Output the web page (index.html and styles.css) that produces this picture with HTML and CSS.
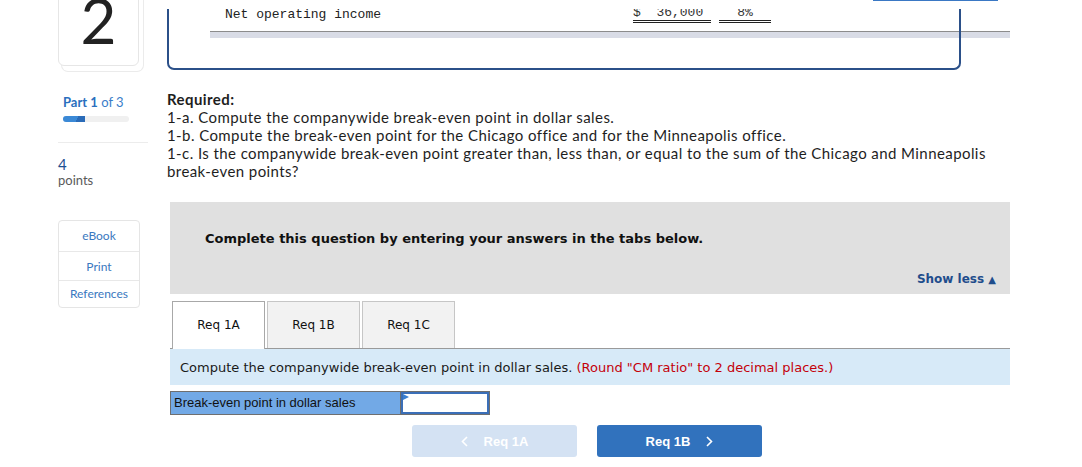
FILE: index.html
```html
<!DOCTYPE html>
<html lang="en">
<head>
<meta charset="utf-8">
<title>Break-even point</title>
<link rel="stylesheet" href="styles.css">
</head>
<body>
<div class="topbar"><div class="topbar-btn"></div></div>
<div class="page">
  <div class="top">
    <div class="qcard"><span class="qnum">2</span></div>
    <div class="exhibit">
      <div class="ex-row">
        <span class="ex-label">Net operating income</span>
        <span class="ex-amt">$  36,000</span>
        <span class="ex-pct">8%</span>
      </div>
      <div class="ex-bar"></div>
    </div>
  </div>

  <div class="body">
    <aside class="side">
      <div class="part"><b>Part 1</b> of 3</div>
      <div class="progress"><div class="progress-fill"></div></div>
      <div class="sep"></div>
      <div class="pts-num">4</div>
      <div class="pts-label">points</div>
      <div class="tools">
        <div class="tool tool-1">eBook</div>
        <div class="tool tool-2">Print</div>
        <div class="tool tool-3">References</div>
      </div>
    </aside>

    <main class="main">
      <div class="required">
        <b>Required:</b><br>
        1-a. Compute the companywide break-even point in dollar sales.<br>
        1-b. Compute the break-even point for the Chicago office and for the Minneapolis office.<br>
        1-c. Is the companywide break-even point greater than, less than, or equal to the sum of the Chicago and Minneapolis <span class="nowrap">break-even points?</span>
      </div>

      <div class="question">
        <div class="banner">
          <div class="banner-text">Complete this question by entering your answers in the tabs below.</div>
          <div class="showless">Show less <span class="tri">&#9650;</span></div>
        </div>

        <div class="tabs">
          <div class="tab active">Req 1A</div>
          <div class="tab">Req 1B</div>
          <div class="tab">Req 1C</div>
        </div>

        <div class="instr">Compute the companywide break-even point in dollar sales. <span class="red">(Round "CM ratio" to 2 decimal places.)</span></div>

        <div class="answer">
          <div class="ans-label">Break-even point in dollar sales</div>
          <div class="ans-input"><span class="flag"></span></div>
        </div>

        <div class="nav">
          <div class="btn btn-prev">
            <svg class="chev" width="7" height="11" viewBox="0 0 7 11"><path d="M6 1 L1.5 5.5 L6 10" fill="none" stroke="#fff" stroke-width="1.6"/></svg>
            <span>Req 1A</span>
          </div>
          <div class="btn btn-next">
            <span>Req 1B</span>
            <svg class="chev" width="7" height="11" viewBox="0 0 7 11"><path d="M1 1 L5.5 5.5 L1 10" fill="none" stroke="#fff" stroke-width="1.6"/></svg>
          </div>
        </div>
      </div>
    </main>
  </div>
</div>
</body>
</html>
```
FILE: styles.css
```css
* { box-sizing: border-box; }
html, body { margin: 0; padding: 0; background: #fff; }
body {
  font-family: Lato, "Liberation Sans", sans-serif;
  color: #1e1e1e;
  position: relative;
  width: 1082px;
  height: 467px;
  overflow: hidden;
}

/* fixed header remnant over the exhibit */
.topbar {
  position: absolute;
  top: 0;
  left: 150px;
  right: 0;
  height: 9px;
  background: #fff;
  z-index: 5;
}
.topbar-btn {
  margin-left: 723px;
  width: 125px;
  height: 1px;
  background: #3a78c4;
}

.page { padding: 0 72px 0 58px; }

/* top row */
.top {
  display: flex;
  align-items: flex-start;
  gap: 28px;
  margin-top: -20px;
}
.qcard {
  width: 81px;
  height: 86px;
  border: 1px solid #e6e6e6;
  border-radius: 0 0 6px 6px;
  background: #fff;
  box-shadow: 4px 5px 0 0 #fff, 4px 5px 0 1px #ebebeb;
  display: flex;
  justify-content: center;
  align-items: flex-end;
  padding-bottom: 14px;
}
.qnum {
  font-family: Lato, sans-serif;
  font-size: 62px;
  line-height: 1;
  color: #222;
}

.exhibit {
  position: relative;
  width: 794px;
  height: 90px;
  padding: 25px 0 0 58px;
}
.exhibit::after {
  content: "";
  position: absolute;
  inset: 0;
  border: 2px solid #2b5089;
  border-top: 0;
  border-radius: 0 0 7px 7px;
  pointer-events: none;
}
.ex-row {
  display: flex;
  align-items: flex-start;
  font: 13px/15px "Liberation Mono", monospace;
  color: #222;
}
.ex-label { width: 408px; padding-top: 2px; }
.ex-amt {
  width: 78px;
  white-space: pre;
  border-bottom: 3px double #222;
  color: #333;
}
.ex-pct {
  width: 52px;
  margin-left: 8px;
  text-align: center;
  border-bottom: 3px double #222;
  color: #333;
}
.ex-bar {
  margin-top: 8px;
  margin-left: -15px;
  width: 800px;
  height: 7px;
  border-top: 1px solid #8c8c8c;
  background: #d9dce6;
}

/* body grid */
.body {
  display: grid;
  grid-template-columns: 90px 843px;
  column-gap: 19px;
  margin-top: 20px;
}

/* sidebar */
.side { padding-top: 4px; }
.part {
  padding-left: 5px;
  font-size: 13px;
  line-height: 16px;
  color: #3a7dc9;
}
.part b { color: #2a6fbe; font-weight: 700; }
.progress {
  margin: 6px 0 0 5px;
  width: 66px;
  height: 6px;
  border-radius: 3px;
  background: #f0f0f0;
  overflow: hidden;
}
.progress-fill {
  width: 22px;
  height: 100%;
  background: linear-gradient(115deg, #3b89d6 0, #3b89d6 62%, #2a6bb8 62%, #2a6bb8 100%);
}
.sep {
  margin-top: 20px;
  border-top: 1px solid #ececec;
  width: 90px;
}
.pts-num {
  margin-top: 13px;
  font-size: 15px;
  line-height: 16px;
  color: #1d4f91;
}
.pts-label {
  font-size: 13px;
  line-height: 16px;
  color: #5a5a5a;
}
.tools {
  margin-top: 32px;
  width: 82px;
  border: 1px solid #e5e5e5;
  border-radius: 4px;
}
.tool {
  text-align: center;
  font-size: 12px;
  color: #3a78c0;
}
.tool-1 { height: 30px; line-height: 29px; }
.tool-2 { height: 29px; line-height: 29px; border-top: 1px solid #e8e8e8; }
.tool-3 { height: 27px; line-height: 26px; border-top: 1px solid #e8e8e8; }

/* main */
.required {
  font-family: Lato, "Open Sans", sans-serif;
  font-size: 15px;
  letter-spacing: 0.42px;
  line-height: 18px;
  color: #1e1e1e;
}
.required b { font-weight: 700; }
.nowrap { white-space: nowrap; }

.question {
  margin: 22px 0 0 3px;
  width: 840px;
  font-family: "DejaVu Sans", Verdana, sans-serif;
}
.banner {
  height: 92px;
  background: #e0e0e0;
  padding: 29px 14px 0 35px;
}
.banner-text {
  font-size: 13px;
  line-height: 16px;
  font-weight: 700;
  color: #111;
}
.showless {
  margin-top: 25px;
  text-align: right;
  font-size: 12px;
  line-height: 14px;
  font-weight: 700;
  color: #1f4d8c;
}
.tri { font-size: 10px; }

.tabs {
  margin-top: 7px;
  display: flex;
  gap: 2px;
  padding-left: 2px;
  border-bottom: 1px solid #9a9a9a;
  height: 48px;
}
.tab {
  width: 93px;
  height: 47px;
  border: 1px solid #c6c6c6;
  border-bottom: 0;
  background: #f2f2f2;
  font-size: 12px;
  line-height: 46px;
  text-align: center;
  color: #111;
}
.tab.active {
  height: 48px;
  background: #fff;
  border-color: #a8a8a8;
}
.instr {
  height: 36px;
  background: #d7eaf8;
  padding: 11px 0 0 10px;
  font-size: 13px;
  line-height: 15px;
  color: #1a1a1a;
}
.red { color: #c4000a; }

.answer {
  margin-top: 6px;
  display: flex;
  width: 320px;
  height: 24px;
  border: 1px solid #6f6f6f;
}
.ans-label {
  width: 230px;
  background: #72a9e6;
  border-right: 1px solid #6f6f6f;
  font-family: "Liberation Sans", Arial, sans-serif;
  font-size: 13px;
  line-height: 22px;
  padding-left: 3px;
  color: #111;
}
.ans-input {
  flex: 1;
  background: #fff;
  border: 2px solid #3b6fb8;
  position: relative;
}
.flag {
  position: absolute;
  left: 0;
  top: 0;
  width: 0;
  height: 0;
  border-left: 6px solid #3b7fd0;
  border-top: 3px solid transparent;
  border-bottom: 3px solid transparent;
}

.nav {
  margin-top: 10px;
  display: flex;
  justify-content: center;
  gap: 20px;
  padding-right: 6px;
}
.btn {
  width: 165px;
  height: 32px;
  border-radius: 3px;
  display: flex;
  align-items: center;
  justify-content: center;
  gap: 16px;
  font-family: "Liberation Sans", Arial, sans-serif;
  font-weight: 700;
  font-size: 13px;
  color: #fff;
}
.btn-prev { background: #d4e2f3; }
.btn-next { background: #3172bd; }
.chev { display: block; }
```
